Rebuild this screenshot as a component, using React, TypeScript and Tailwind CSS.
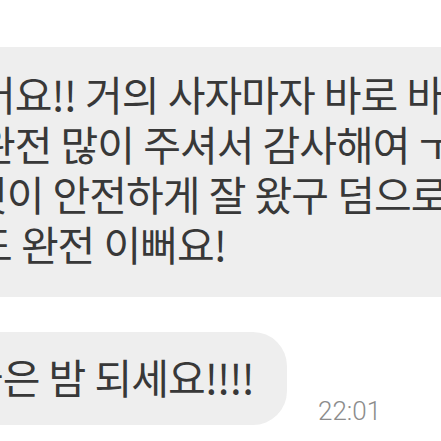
export default function App() {
  const kr = { fontFamily: '"Noto Sans CJK KR", "Noto Sans", sans-serif' };
  return (
    <div className="w-[441px] h-[441px] overflow-hidden bg-white relative">
      <div className="flex flex-col">
        <div
          className="mt-[47px] ml-[-60px] w-[560px] bg-[#eeeeee] pt-[21px] pb-[29px] text-[41px] leading-[50px] tracking-[-1px] [word-spacing:1px] text-[#383838] whitespace-nowrap"
          style={kr}
        >
          <div className="pl-[38px]">어요!! 거의 사자마자 바로 바로 보내주셨어요</div>
          <div className="pl-[38px]">완전 많이 주셔서 감사해여 ㅜㅜ</div>
          <div className="pl-[30px]">것이 안전하게 잘 왔구 덤으로 주신</div>
          <div className="pl-[35px]">도 완전 이뻐요!</div>
        </div>
        <div className="mt-[35px] flex items-end">
          <div
            className="ml-[-60px] w-[347px] rounded-r-[34px] bg-[#eeeeee] pt-[19px] pb-[24px] pl-[26px] text-[41px] leading-[50px] tracking-[-1px] [word-spacing:1px] text-[#383838] whitespace-nowrap"
            style={kr}
          >
            좋은 밤 되세요!!!!
          </div>
          <div
            className="ml-[31px] mb-[1px] text-[26px] leading-none font-light text-[#8c8c8c]"
            style={{ fontFamily: 'Roboto, "Liberation Sans", sans-serif' }}
          >
            22:01
          </div>
        </div>
      </div>
    </div>
  );
}
